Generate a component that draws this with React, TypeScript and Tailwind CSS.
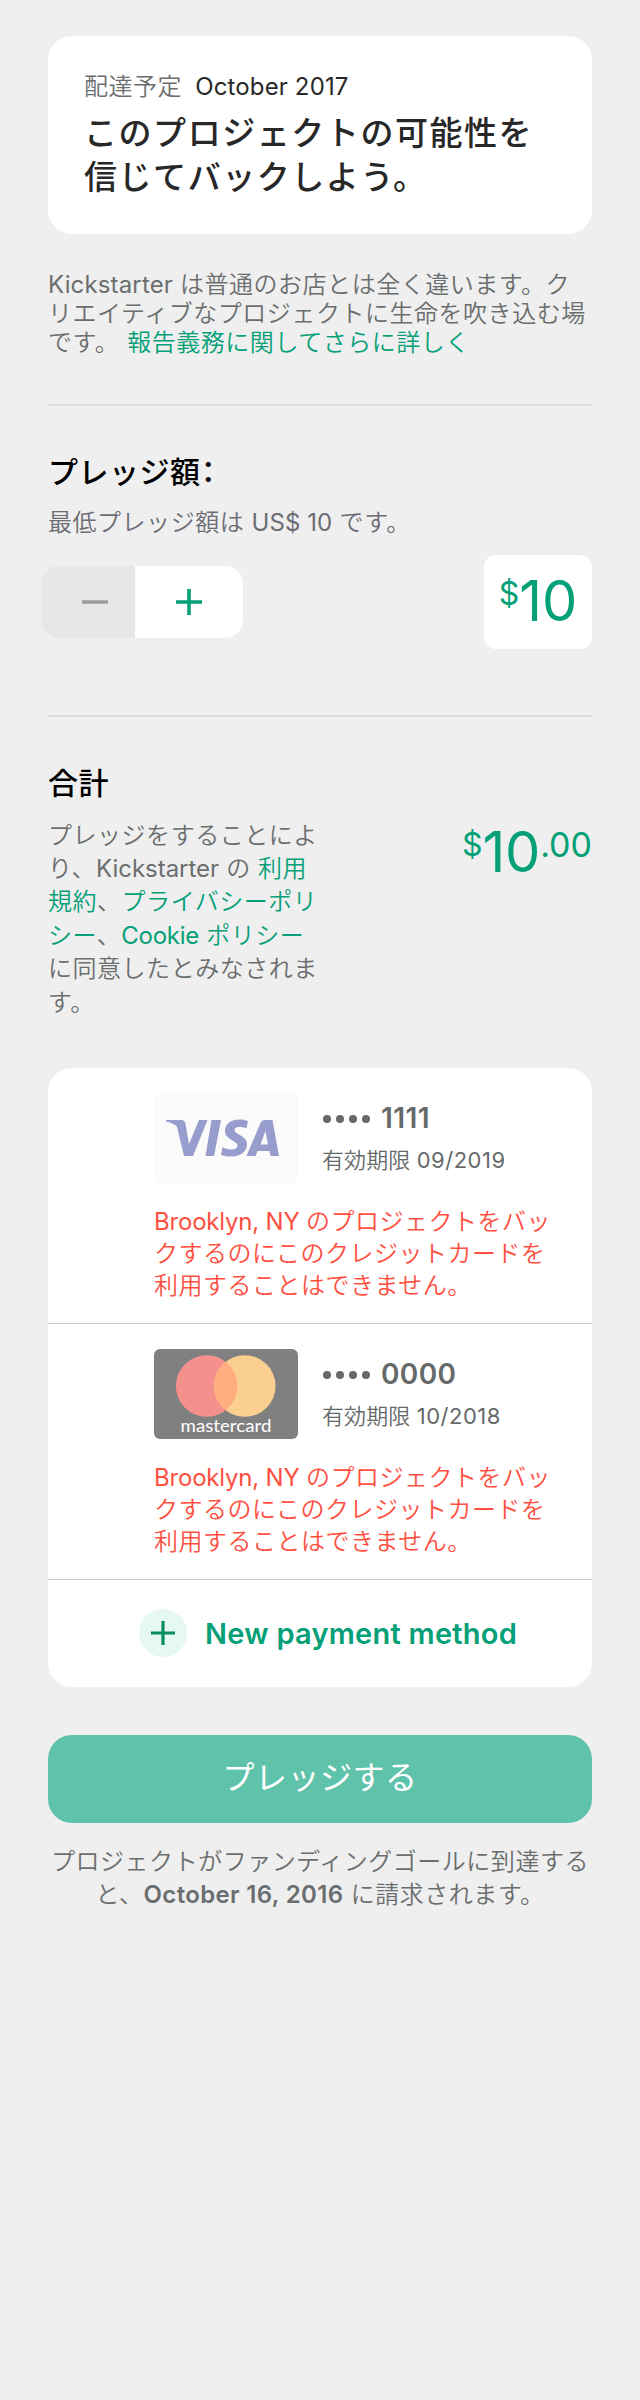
import type { ReactNode } from "react";

function Latin({ children, className = "" }: { children: ReactNode; className?: string }) {
  return <span className={className || "font-normal tracking-[0.080px]"}>{children}</span>;
}

function Link({ children }: { children: ReactNode }) {
  return <a className="text-[#05a077]">{children}</a>;
}

function VisaLogo() {
  return (
    <svg viewBox="0 0 144 90" className="h-[90px] w-36 shrink-0">
      <rect width="144" height="90" rx="6" fill="#fbfbfb" />
      <g fill="#979dcc">
        <path d="M12 27H27C30 27 31 28.500 31.500 31L35 51L45 27H53.500L39 63H30L23.500 36C23 33.500 22.500 32.800 20.500 31.800C18 30.400 15 29.300 12 28.600Z" />
        <path d="M57.500 27H67L60 63H51.500Z" />
        <path d="M94 28L92.500 35.300C89 33.800 80.500 32.800 80.500 37C80.500 41.500 93 42.500 93 51C93 64.500 75 65.500 67 61.700L68.500 54.300C72 56.500 83.500 58.500 83.500 52.300C83.500 47.500 71 47 71 38C71 25.500 87 24.800 94 28Z" />
        <path fillRule="evenodd" d="M111 27H118.500L125 63H116.500L115.500 58H103.500L101.500 63H92.500L106.500 30C107.500 28 108.500 27 111 27ZM111.500 38L106.500 51.500H114Z" />
      </g>
    </svg>
  );
}

function MastercardLogo() {
  return (
    <svg viewBox="0 0 144 90" className="h-[90px] w-36 shrink-0">
      <rect width="144" height="90" rx="6" fill="#808080" />
      <circle cx="52.700" cy="37" r="30.800" fill="#f5918d" />
      <circle cx="90.800" cy="37" r="30.800" fill="#fbcf8f" />
      <path d="M71.750 12.800A30.800 30.800 0 0 1 71.750 61.200A30.800 30.800 0 0 1 71.750 12.800Z" fill="#ffae7f" />
      <text
        x="26.500"
        y="83"
        textLength="91"
        lengthAdjust="spacingAndGlyphs"
        fontSize="16.500"
        fill="#fff"
        className="font-[Lato,sans-serif] font-normal tracking-[0px]"
      >
        mastercard
      </text>
    </svg>
  );
}

function PaymentRow({ logo, digits, expiry }: { logo: ReactNode; digits: ReactNode; expiry: ReactNode }) {
  return (
    <div className="h-64 border-b border-[#c6c6c6] pt-[25px] pl-[106px]">
      <div className="flex gap-6">
        {logo}
        <div className="pt-2 text-[#656969]">
          <div className="flex h-[34px] items-center text-[28px] leading-[34px] font-semibold tracking-[0.400px]">
            <span className="mr-[11px] flex gap-[5px] pt-0.5 pl-px">
              <i className="size-2 rounded-full bg-[#656969]" />
              <i className="size-2 rounded-full bg-[#656969]" />
              <i className="size-2 rounded-full bg-[#656969]" />
              <i className="size-2 rounded-full bg-[#656969]" />
            </span>
            {digits}
          </div>
          <div className="mt-[9px] text-[22px] leading-[32px] tracking-[0.1px]">
            有効期限 <span className="font-normal tracking-[0.500px]">{expiry}</span>
          </div>
        </div>
      </div>
      <p className="mt-[23px] text-2xl leading-[32px] tracking-[0.5px] whitespace-nowrap text-[#ff4f3f]">
        <Latin className="font-normal tracking-[-0.200px]">Brooklyn, NY </Latin>のプロジェクトをバッ
        <br />
        クするのにこのクレジットカードを
        <br />
        利用することはできません。
      </p>
    </div>
  );
}

export default function App() {
  return (
    <main
      lang="ja"
      className="flex h-[2400px] w-[640px] flex-col bg-[#efefef] px-12 pt-9 font-[Inter,'Noto_Sans_CJK_JP',sans-serif] text-2xl font-[350] tracking-[0.530px] text-[#6b6e6e]"
    >
      <section className="h-[198px] rounded-[24px] bg-white px-9 pt-[35px] whitespace-nowrap">
        <div className="flex h-8 items-center gap-[13px] leading-8">
          <span>配達予定</span>
          <Latin className="font-normal tracking-[0.150px] text-[#282828]">October 2017</Latin>
        </div>
        <h1 className="mt-2 text-[33px] leading-[44px] font-medium tracking-[1.550px] text-[#282828]">
          このプロジェクトの可能性を
          <br />
          信じてバックしよう。
        </h1>
      </section>

      <p className="mt-9 leading-[29.200px] whitespace-nowrap">
        <Latin className="font-normal tracking-[0.150px]">Kickstarter </Latin>は普通のお店とは全く違います。ク
        <br />
        リエイティブなプロジェクトに生命を吹き込む場
        <br />
        です。<span className="ml-2"><Link>報告義務に関してさらに詳しく</Link></span>
      </p>

      <section className="mt-[46px] h-[311px] border-t-2 border-[#dcdcdc] pt-[46px]">
        <h2 className="text-[30px] leading-[40px] font-medium text-black [font-feature-settings:'halt']">プレッジ額：</h2>
        <p className="mt-[15px] leading-8 text-[#6c6c74]">
          最低プレッジ額は <Latin>US$ 10</Latin> です。
        </p>
        <div className="mt-4 -ml-[7px] flex items-center justify-between">
          <div className="flex h-[72px] w-[202px] overflow-hidden rounded-[18px]">
            <button className="flex w-[94px] items-center justify-end bg-[#e7e7e7] pr-[27px]">
              <svg viewBox="0 0 26 26" className="size-[26px]" stroke="#9b9e9e" strokeWidth="3.600">
                <path d="M0 13H26" />
              </svg>
            </button>
            <button className="flex flex-1 items-center bg-white pl-[41px]">
              <svg viewBox="0 0 26 26" className="size-[26px]" stroke="#05a077" strokeWidth="3.600">
                <path d="M0 13H26M13 0V26" />
              </svg>
            </button>
          </div>
          <div className="flex h-[94px] w-[108px] items-start justify-center rounded-xl bg-white pt-3.5 font-normal tracking-[0px] text-[#05a077]">
            <span className="mt-0.5 text-[32px] leading-[46px]">$</span>
            <span className="text-[56px] leading-[64px]">10</span>
          </div>
        </div>
      </section>

      <section className="h-[353px] border-t-2 border-[#dcdcdc] pt-[46px]">
        <h2 className="text-[30px] leading-[40px] font-medium text-black">合計</h2>
        <div className="mt-4 flex items-start justify-between">
          <p className="leading-[33.400px] whitespace-nowrap">
            プレッジをすることによ
            <br />
            り、<Latin className="font-normal tracking-[-0.050px]">Kickstarter</Latin> の <Link>利用</Link>
            <br />
            <Link>規約</Link>、<Link>プライバシーポリ</Link>
            <br />
            <Link>シー</Link>、
            <Link>
              <Latin className="font-normal tracking-[-0.300px]">Cookie</Latin> ポリシー
            </Link>
            <br />
            に同意したとみなされま
            <br />す。
          </p>
          <div className="flex items-start pt-px font-normal tracking-[0px] text-[#05a077]">
            <span className="mt-0.5 text-[32px] leading-[46px]">$</span>
            <span className="text-[56px] leading-[64px] tracking-[-0.200px]">10</span>
            <span className="mt-0.5 text-[34px] leading-[46px]">.00</span>
          </div>
        </div>
      </section>

      <section className="h-[619px] rounded-[24px] bg-white">
        <PaymentRow logo={<VisaLogo />} digits="1111" expiry="09/2019" />
        <PaymentRow logo={<MastercardLogo />} digits="0000" expiry="10/2018" />
        <button className="flex h-[107px] items-center pl-[91px] text-[29px] font-semibold tracking-[0.250px] text-[#05a077]">
          <svg viewBox="0 0 48 48" className="mr-[18px] size-12">
            <circle cx="24" cy="24" r="24" fill="#e5f9f1" />
            <path d="M12 24H36M24 12V36" stroke="#068b62" strokeWidth="3.200" />
          </svg>
          <span className="pt-[3px]">New payment method</span>
        </button>
      </section>

      <button className="mt-12 h-[88px] shrink-0 rounded-[24px] bg-[#5fc2aa] text-[32px] font-normal text-white">プレッジする</button>
      <p className="mt-[22px] text-center leading-[33px] whitespace-nowrap">
        プロジェクトがファンディングゴールに到達する
        <br />
        と、<Latin className="font-semibold tracking-[0.350px]">October 16, 2016</Latin> に請求されます。
      </p>
    </main>
  );
}
